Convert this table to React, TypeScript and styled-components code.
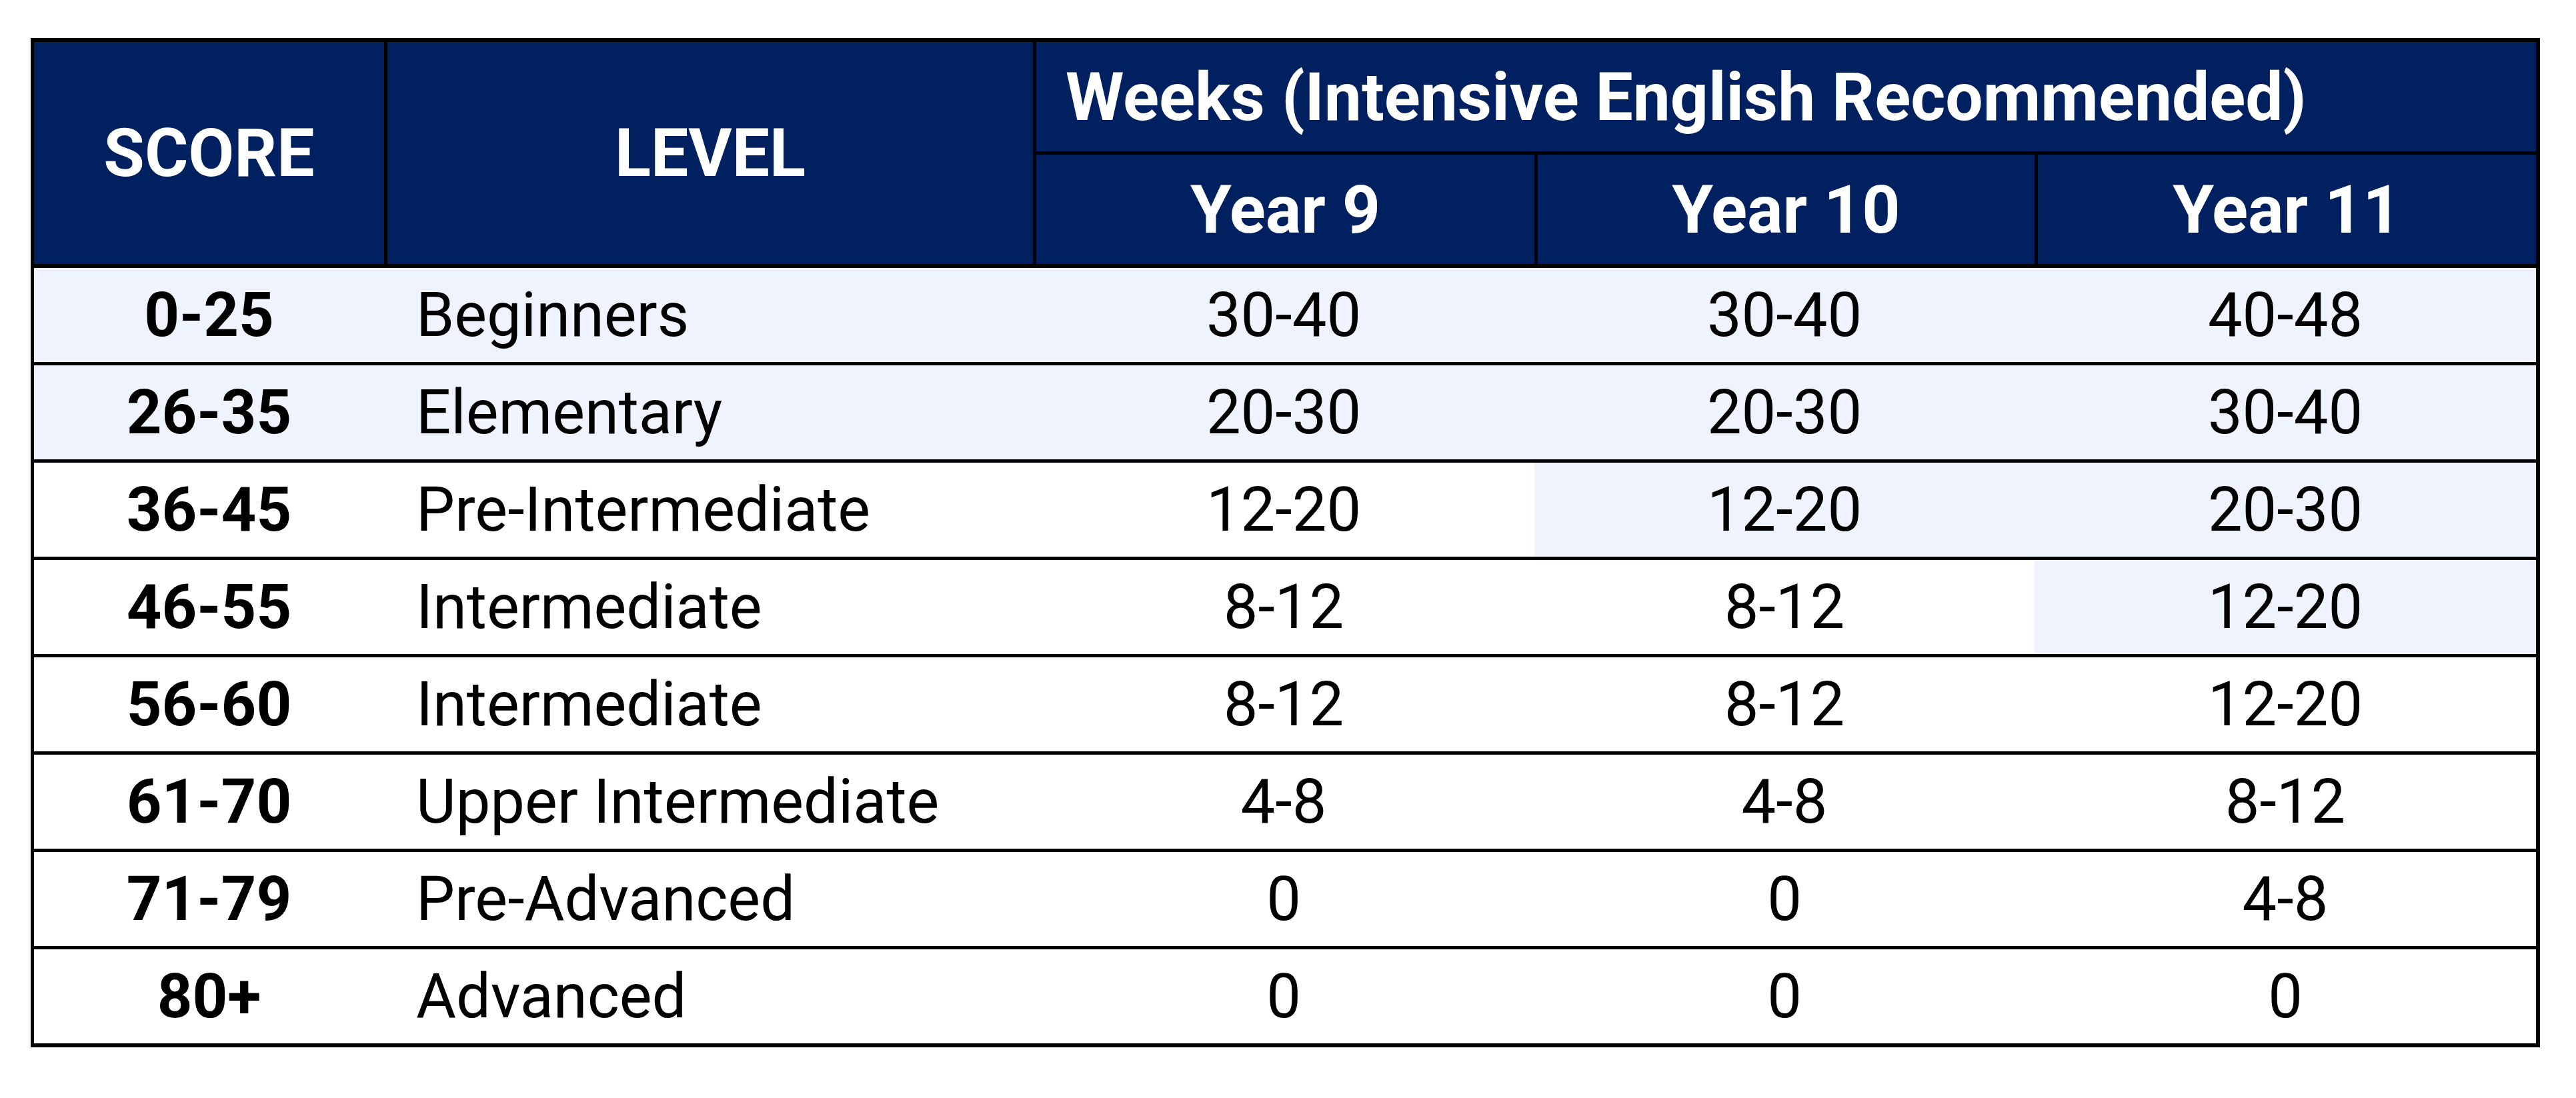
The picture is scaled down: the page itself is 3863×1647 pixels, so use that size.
import React from "react"
import styled, { createGlobalStyle } from "styled-components"

const navy = "#002060"
const tint = "#EEF3FD"
const line = "#000"

const GlobalStyle = createGlobalStyle`
    html, body {
        margin: 0;
        padding: 0;
        background: #fff;
    }
    body {
        font-family: Roboto, "Liberation Sans", Arial, sans-serif;
        color: #000;
    }
`

const Page = styled.div`
    padding: 57px 0 0 46px;
`

const Table = styled.div`
    width: 3763px;
    box-sizing: border-box;
    border: 6px solid ${line};
    border-left-width: 5px;
`

const columns = "525px 973px 752px 750px 752px"

const Head = styled.div`
    display: grid;
    grid-template-columns: ${columns};
    grid-template-rows: 169px 164px;
    background: ${navy};
    border-bottom: 6px solid ${line};
`

const HeadCell = styled.div<{ $first?: boolean; $tall?: boolean; $span?: number; $left?: boolean; $under?: boolean }>`
    grid-row: ${p => (p.$tall ? "1 / span 2" : "auto")};
    grid-column: ${p => (p.$span ? `span ${p.$span}` : "auto")};
    box-sizing: border-box;
    display: flex;
    align-items: center;
    justify-content: ${p => (p.$left ? "flex-start" : "center")};
    padding-left: ${p => (p.$left ? "44px" : "0")};
    border-left: ${p => (p.$first ? "none" : `5px solid ${line}`)};
    border-bottom: ${p => (p.$under ? `5px solid ${line}` : "none")};
    color: #fff;
    font-weight: 700;
    font-size: 100px;
    white-space: nowrap;
`

const Row = styled.div<{ $first?: boolean }>`
    display: grid;
    grid-template-columns: ${columns};
    height: 141px;
    border-top: ${p => (p.$first ? "none" : `5px solid ${line}`)};
`

const Cell = styled.div<{ $shade?: boolean; $align?: "left" | "center"; $bold?: boolean }>`
    display: flex;
    align-items: center;
    justify-content: ${p => (p.$align === "left" ? "flex-start" : "center")};
    padding-left: ${p => (p.$align === "left" ? "48px" : "0")};
    background: ${p => (p.$shade ? tint : "#fff")};
    font-size: 92px;
    font-weight: ${p => (p.$bold ? 700 : 400)};
    white-space: nowrap;
`

type Band = {
    score: string
    level: string
    weeks: [string, string, string]
    shaded: number // cells from this index onward get the tint
}

const bands: Band[] = [
    { score: "0-25", level: "Beginners", weeks: ["30-40", "30-40", "40-48"], shaded: 0 },
    { score: "26-35", level: "Elementary", weeks: ["20-30", "20-30", "30-40"], shaded: 0 },
    { score: "36-45", level: "Pre-Intermediate", weeks: ["12-20", "12-20", "20-30"], shaded: 3 },
    { score: "46-55", level: "Intermediate", weeks: ["8-12", "8-12", "12-20"], shaded: 4 },
    { score: "56-60", level: "Intermediate", weeks: ["8-12", "8-12", "12-20"], shaded: 5 },
    { score: "61-70", level: "Upper Intermediate", weeks: ["4-8", "4-8", "8-12"], shaded: 5 },
    { score: "71-79", level: "Pre-Advanced", weeks: ["0", "0", "4-8"], shaded: 5 },
    { score: "80+", level: "Advanced", weeks: ["0", "0", "0"], shaded: 5 },
]

export default function App() {
    return (
        <Page>
            <GlobalStyle />
            <Table>
                <Head>
                    <HeadCell $first $tall>SCORE</HeadCell>
                    <HeadCell $tall>LEVEL</HeadCell>
                    <HeadCell $span={3} $left $under>Weeks (Intensive English Recommended)</HeadCell>
                    <HeadCell>Year 9</HeadCell>
                    <HeadCell>Year 10</HeadCell>
                    <HeadCell>Year 11</HeadCell>
                </Head>
                {bands.map((b, i) => (
                    <Row key={b.score} $first={i === 0}>
                        <Cell $bold $shade={b.shaded <= 0}>{b.score}</Cell>
                        <Cell $align="left" $shade={b.shaded <= 1}>{b.level}</Cell>
                        {b.weeks.map((w, j) => (
                            <Cell key={j} $shade={b.shaded <= j + 2}>{w}</Cell>
                        ))}
                    </Row>
                ))}
            </Table>
        </Page>
    )
}
